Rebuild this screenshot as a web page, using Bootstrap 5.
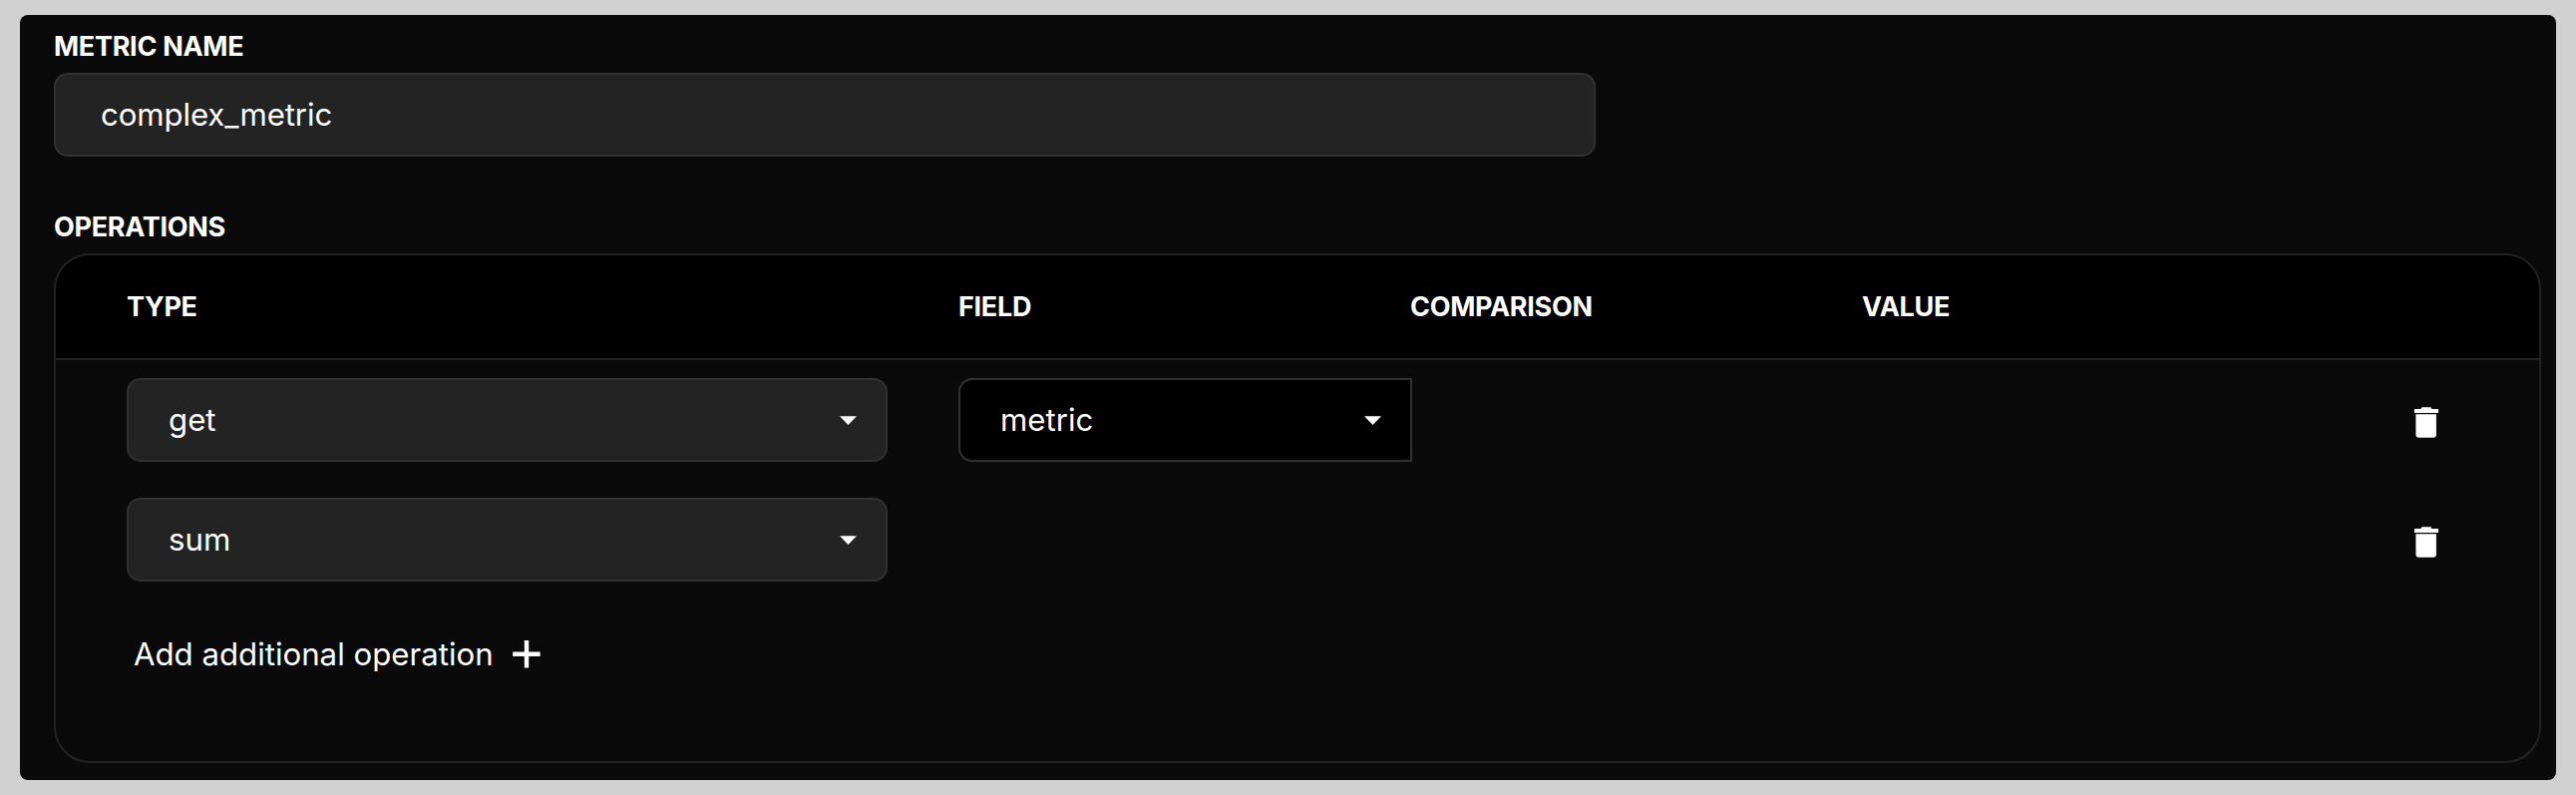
<!DOCTYPE html>
<html lang="en">
<head>
<meta charset="utf-8">
<meta name="viewport" content="width=device-width, initial-scale=1">
<title>Metric editor</title>
<link href="https://cdn.jsdelivr.net/npm/bootstrap@5.3.0/dist/css/bootstrap.min.css" rel="stylesheet">
<style>
  body { background: #d1d1d1; color: #fff; font-family: Inter, sans-serif; font-size: 31.2px; line-height: 40px; padding: 15px 20px; }
  .panel { background: #0a0a0a; border-radius: 8px; height: 767px; padding: 14px 15px 17px 34px; }
  .caption { font-size: 27px; line-height: 35px; font-weight: 700; letter-spacing: -.3px; }
  .ops-caption { margin-top: 53px; }
  .field { height: 84px; background: #232323; border: 2px solid #313131; border-radius: 14px; color: #fff; }
  .name-field { width: 1546px; margin-top: 9px; padding: 0 44px 0 45px; font-size: 31.2px; line-height: 40px; letter-spacing: -.1px; }
  .name-field:focus { background: #232323; color: #fff; }
  .ops { border: 2px solid #232323; border-radius: 36px; height: 511px; margin-top: 9px; }
  .ops-grid { display: grid; grid-template-columns: 834px 453px 453px 1fr 24px; padding: 0 101px 0 71px; align-items: center; }
  .ops-head { height: 105px; background: #000; border-bottom: 2px solid #232323; }
  .ops-body { padding-top: 18px; row-gap: 36px; }
  .pick { padding: 0 29px 0 40px; }
  .pick-type { width: 763px; }
  .pick-field { width: 455px; background: #000; border-radius: 14px 0 0 14px; }
  .trash { grid-column: 5; width: 24px; height: 31px; margin-top: 5px; }
  .add-op { margin: 53px 0 0 78px; color: #fff; gap: 19px; font-size: 31.2px; line-height: 40px; }
</style>
</head>
<body>
<main class="panel d-flex flex-column">
  <label class="caption" for="metric">METRIC NAME</label>
  <input id="metric" class="field name-field form-control shadow-none" value="complex_metric">
  <div class="caption ops-caption">OPERATIONS</div>
  <section class="ops overflow-hidden">
    <div class="ops-head ops-grid caption">
      <div>TYPE</div><div>FIELD</div><div>COMPARISON</div><div>VALUE</div>
    </div>
    <div class="ops-body ops-grid">
      <div class="field pick pick-type d-flex align-items-center justify-content-between">
        <span>get</span>
        <svg width="17" height="9" viewBox="0 0 17 9" fill="#fff"><path d="M0 .3h17L8.5 8.9z"/></svg>
      </div>
      <div class="field pick pick-field d-flex align-items-center justify-content-between">
        <span>metric</span>
        <svg width="17" height="9" viewBox="0 0 17 9" fill="#fff"><path d="M0 .3h17L8.5 8.9z"/></svg>
      </div>
      <svg class="trash" viewBox="0 0 24 31" fill="#fff"><path d="M0 2h6.3L7.5.3h9L17.3 2H24v4H0zM1.4 7.2h20.5v20.3a3.2 3.2 0 0 1-3.2 3.3H4.6a3.2 3.2 0 0 1-3.2-3.3z"/></svg>
      <div class="field pick pick-type d-flex align-items-center justify-content-between">
        <span>sum</span>
        <svg width="17" height="9" viewBox="0 0 17 9" fill="#fff"><path d="M0 .3h17L8.5 8.9z"/></svg>
      </div>
      <svg class="trash" viewBox="0 0 24 31" fill="#fff"><path d="M0 2h6.3L7.5.3h9L17.3 2H24v4H0zM1.4 7.2h20.5v20.3a3.2 3.2 0 0 1-3.2 3.3H4.6a3.2 3.2 0 0 1-3.2-3.3z"/></svg>
    </div>
    <button type="button" class="add-op btn p-0 border-0 rounded-0 d-flex align-items-center">
      <span>Add additional operation</span>
      <svg width="28" height="28" viewBox="0 0 28 28" fill="none" stroke="#fff" stroke-width="4.4"><path d="M14 0v27.6M.2 13.8h27.4"/></svg>
    </button>
  </section>
</main>
<script src="https://cdn.jsdelivr.net/npm/bootstrap@5.3.0/dist/js/bootstrap.bundle.min.js"></script>
</body>
</html>
